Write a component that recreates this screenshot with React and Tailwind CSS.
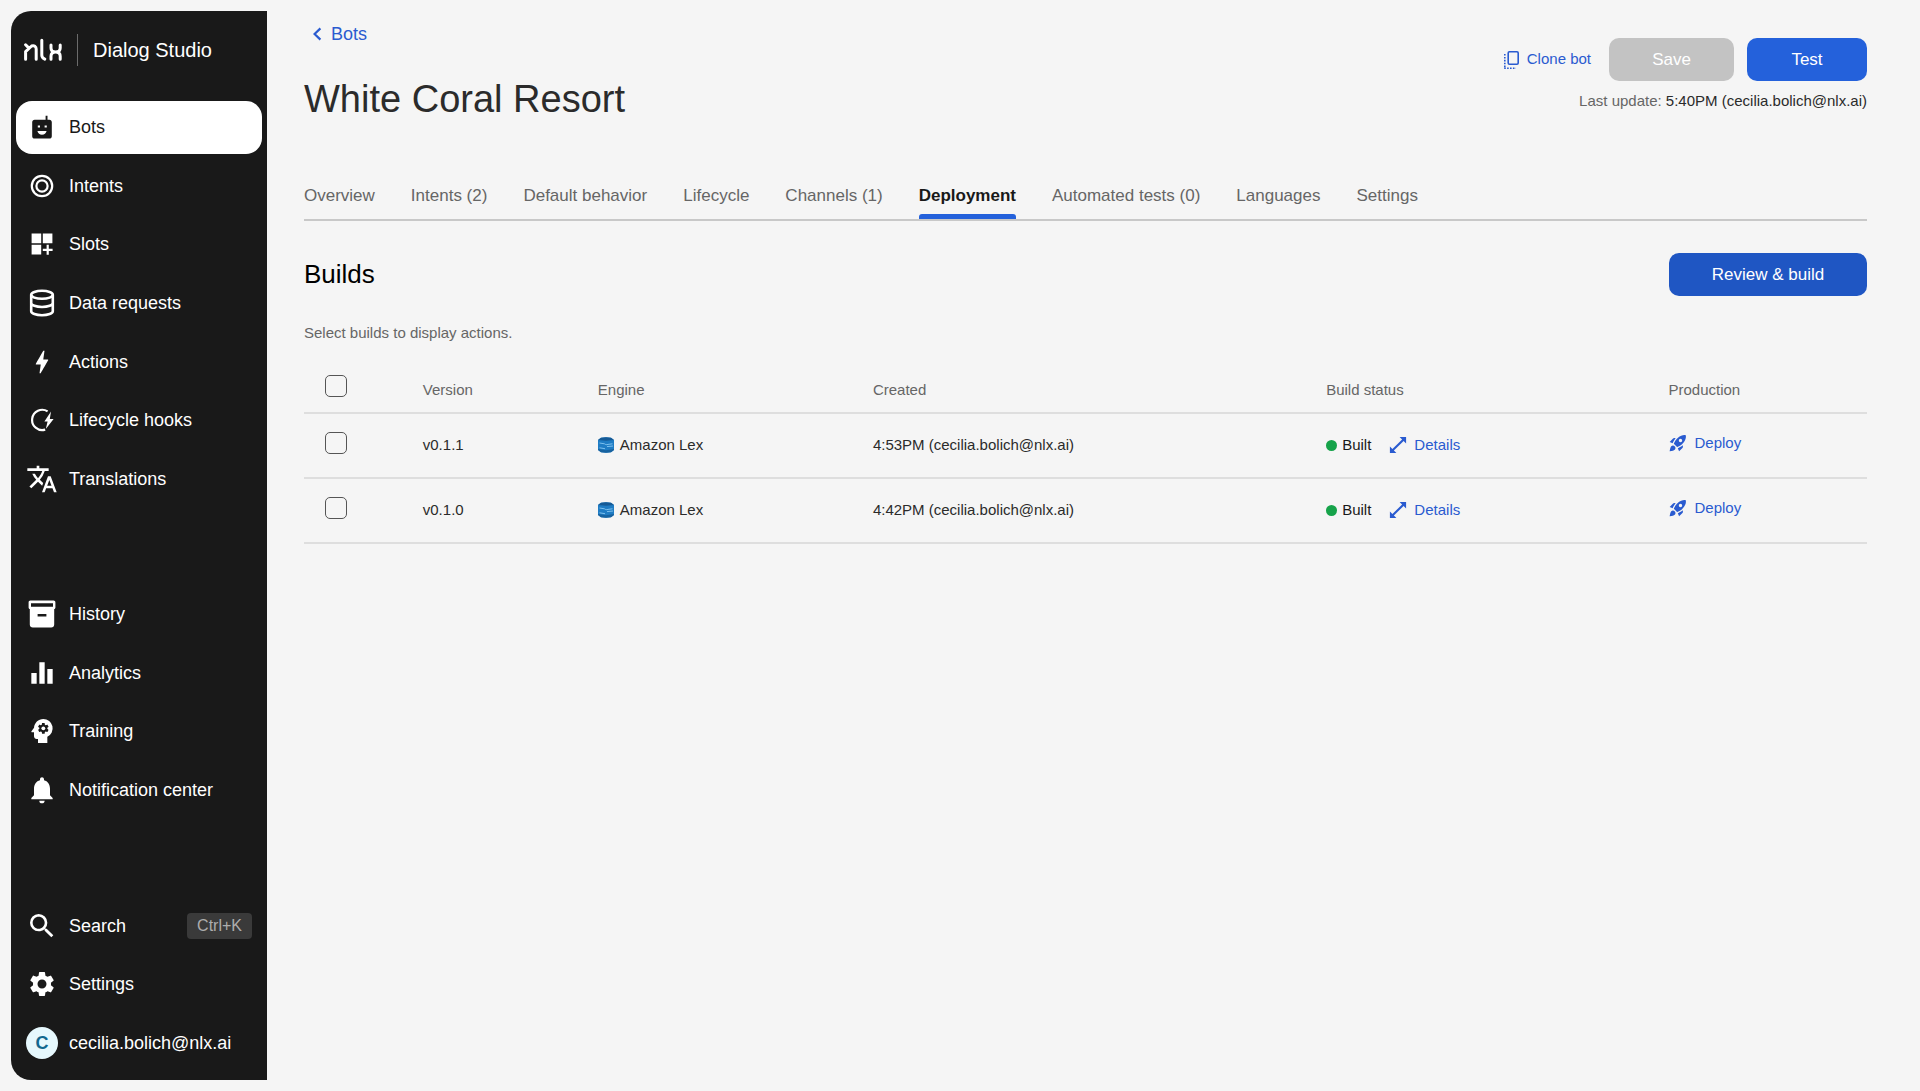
import { useState } from "react";
import {
  MdTranslate,
  MdEqualizer,
  MdPsychology,
  MdNotifications,
  MdSearch,
  MdSettings,
  MdBolt,
  MdRocketLaunch,
} from "react-icons/md";

function NlxLogo() {
  return (
    <svg viewBox="0 0 38 24" className="h-6 w-[38px]" fill="none" stroke="currentColor" strokeWidth="3" strokeLinecap="round" strokeLinejoin="round" aria-label="nlx">
      <path d="M1.600 6.800l2.800 2.800M1.600 21.200v-7.600l6-5.600c2.600-1 4.600.4 4.600 3v10.200" />
      <path d="M17.800 2.200v15c0 2 1 3 3 4" />
      <path d="M27 7v3c0 2.600 1.600 4 4.600 4s4.600-1.400 4.600-4V7M27 21.200v-3c0-2.600 1.600-4.200 4.600-4.200s4.600 1.600 4.600 4.200v3" />
    </svg>
  );
}

function BotIcon() {
  return (
    <svg viewBox="0 0 24 24" className="h-6 w-6" fill="currentColor">
      <path fillRule="evenodd" d="M15.6.8h1.9v4h1.9c1.4 0 2.4 1 2.4 2.4v14c0 1.4-1 2.4-2.4 2.4H4.6c-1.4 0-2.4-1-2.4-2.4v-14c0-1.4 1-2.4 2.4-2.4h11zM7.8 10.4v2.2H10v-2.2zm6.8 0v2.2h2.2v-2.2zM7.4 16c.5 2.2 2.3 3.8 4.6 3.8s4.1-1.6 4.6-3.8z" />
    </svg>
  );
}

function IntentsIcon() {
  return (
    <svg viewBox="0 0 24 24" className="h-6 w-6" fill="none" stroke="currentColor" strokeWidth="2.2">
      <circle cx="12" cy="12" r="10.2" />
      <circle cx="12" cy="12" r="5.600" />
    </svg>
  );
}

function SlotsIcon() {
  return (
    <svg viewBox="0 0 24 24" className="h-6 w-6" fill="currentColor">
      <path d="M1.6 1.6h9.600v9.600H1.600zM12.800 1.600h9.600v9.600h-9.600zM1.600 12.800h9.600v9.600H1.600zM16.600 12.800h2.200v3.900h3.800v2.200h-3.800v3.800h-2.200v-3.800h-3.800v-2.200h3.800z" />
    </svg>
  );
}

function DataIcon() {
  return (
    <svg viewBox="0 0 28 28" className="h-7 w-7" fill="none" stroke="currentColor" strokeWidth="2.600">
      <ellipse cx="14" cy="5.800" rx="10.800" ry="4" />
      <path d="M3.200 5.800v16.400c0 2.200 4.800 4 10.800 4s10.800-1.800 10.800-4V5.800M3.200 14c0 2.200 4.800 4 10.800 4s10.800-1.800 10.800-4" />
    </svg>
  );
}

function LifecycleIcon() {
  return (
    <svg viewBox="0 0 24 24" className="h-6 w-6" fill="none">
      <path d="M17.6 3.400A10.100 10.100 0 1 0 15.200 21.600" stroke="currentColor" strokeWidth="2.200" />
      <path d="M21 3.600l-6.600 10h3.200L15.800 21l7.800-10h-3.800z" fill="currentColor" />
    </svg>
  );
}

function HistoryIcon() {
  return (
    <svg viewBox="0 0 28 28" className="h-7 w-7" fill="currentColor">
      <path fillRule="evenodd" d="M2.4.6h23.2c1 0 1.8.8 1.8 1.8v5c0 .8-.5 1.5-1.2 1.7v15.5c0 1.8-1.2 3-3 3H4.8c-1.8 0-3-1.2-3-3V9.1C1.100 8.900.6 8.200.6 7.400v-5C.6 1.400 1.400.6 2.400.6zM3 3.200v3.600h22V3.200zM9.600 14v2.400h8.800V14z" />
    </svg>
  );
}

function CloneIcon() {
  return (
    <svg viewBox="0 0 18 20" className="h-5 w-[18px]" fill="none" stroke="currentColor">
      <rect x="5.200" y="1.800" width="10" height="12.400" rx="1.200" strokeWidth="1.600" />
      <path d="M1.800 4v14.600M1.200 18.200h11.800" strokeWidth="1.600" strokeDasharray="1.600 1.300" />
    </svg>
  );
}

function ExpandIcon() {
  return (
    <svg viewBox="0 0 18 18" className="h-[18px] w-[18px]" fill="currentColor">
      <path d="M10.600.900h6.500v6.500l-2.500-2.500L4.900 14.600l2.500 2.500H.900v-6.500l2.500 2.500L13.100 3.400z" />
    </svg>
  );
}

function LexIcon() {
  return (
    <svg viewBox="0 0 16 16" className="h-4 w-4">
      <path d="M0 3l3-2.200L8 .2l5 .6L16 3v10l-3 2.200-5 .6-5-.6L0 13z" fill="#1f7cc4" />
      <path d="M0 3l3-2.200L8 .2l5 .6L16 3l-8 .8z" fill="#155a96" />
      <path d="M0 12l8 1.200 8-1.200v1l-3 2.200-5 .6-5-.6L0 13z" fill="#17629f" />
      <path d="M1.500 6l5 .8c1 .8 2 1.200 3.500.6l4.500-.6M1.500 10.800l5.500.9M9 9.600l6-.6" fill="none" stroke="#7cc0ee" strokeWidth="1" />
    </svg>
  );
}

const NAV_GROUPS = [
  {
    label: "Workspace",
    className: "flex-7",
    items: [
      { label: "Bots", icon: <BotIcon />, active: true },
      { label: "Intents", icon: <IntentsIcon /> },
      { label: "Slots", icon: <SlotsIcon /> },
      { label: "Data requests", icon: <DataIcon /> },
      { label: "Actions", icon: <MdBolt className="h-[30px] w-[30px]" /> },
      { label: "Lifecycle hooks", icon: <LifecycleIcon /> },
      { label: "Translations", icon: <MdTranslate className="h-8 w-8" /> },
    ],
  },
  {
    label: "Insights",
    className: "flex-4",
    items: [
      { label: "History", icon: <HistoryIcon /> },
      { label: "Analytics", icon: <MdEqualizer className="h-8 w-8" /> },
      { label: "Training", icon: <MdPsychology className="h-8 w-8" /> },
      { label: "Notification center", icon: <MdNotifications className="h-8 w-8" /> },
    ],
  },
  {
    label: "Account",
    className: "flex-3",
    items: [
      { label: "Search", icon: <MdSearch className="h-8 w-8" />, shortcut: "Ctrl+K" },
      { label: "Settings", icon: <MdSettings className="h-[30px] w-[30px]" /> },
      {
        label: "cecilia.bolich@nlx.ai",
        icon: <span className="flex h-8 w-8 items-center justify-center rounded-full bg-[#e6f8fd] text-lg font-bold text-[#12688f]">C</span>,
      },
    ],
  },
];

const TABS = [
  "Overview",
  "Intents (2)",
  "Default behavior",
  "Lifecycle",
  "Channels (1)",
  "Deployment",
  "Automated tests (0)",
  "Languages",
  "Settings",
];

const BUILDS = [
  { version: "v0.1.1", engine: "Amazon Lex", created: "4:53PM (cecilia.bolich@nlx.ai)", status: "Built" },
  { version: "v0.1.0", engine: "Amazon Lex", created: "4:42PM (cecilia.bolich@nlx.ai)", status: "Built" },
];

function NavItem({ item }) {
  return (
    <li className="flex-1 py-[3px]">
      <a
        href="#"
        className={`flex h-full items-center rounded-2xl px-[10px] text-lg ${item.active ? "bg-white text-[#191919]" : "text-white"}`}
      >
        <span className="flex w-8 shrink-0 items-center justify-center">{item.icon}</span>
        <span className="ml-[11px]">{item.label}</span>
        {item.shortcut && (
          <kbd className="ml-auto rounded bg-[#3a3a3a] px-[10px] py-px font-['Liberation_Sans',Arial,sans-serif] text-base text-[#adadad]">{item.shortcut}</kbd>
        )}
      </a>
    </li>
  );
}

function Sidebar() {
  return (
    <aside className="flex w-64 shrink-0 flex-col rounded-l-[20px] bg-[#191919] px-[5px] pb-2">
      <div className="flex h-[87px] items-start pt-[23px] pl-2 text-white">
        <div className="flex h-8 items-center">
          <NlxLogo />
          <span className="mx-[15px] h-8 w-px bg-[#6b6b6b]" />
          <span className="text-[20px]">Dialog Studio</span>
        </div>
      </div>
      <nav className="flex flex-1 flex-col gap-[77px]">
        {NAV_GROUPS.map((group) => (
          <ul key={group.label} className={`flex flex-col ${group.className}`}>
            {group.items.map((item) => (
              <NavItem key={item.label} item={item} />
            ))}
          </ul>
        ))}
      </nav>
    </aside>
  );
}

function Checkbox({ label, checked, onChange }) {
  return (
    <input
      type="checkbox"
      aria-label={label}
      checked={checked}
      onChange={onChange}
      className="block h-[22px] w-[22px] appearance-none rounded-[5px] border border-[#555] checked:bg-[#2461db]"
    />
  );
}

function BuildsTable() {
  const [selected, setSelected] = useState([]);
  const toggle = (version) =>
    setSelected((prev) => (prev.includes(version) ? prev.filter((v) => v !== version) : [...prev, version]));
  const allSelected = selected.length === BUILDS.length;

  return (
    <table className="mt-4 w-full table-fixed text-left text-[15px] text-[#2b2b2b]">
      <colgroup>
        <col className="w-[7.6%]" />
        <col className="w-[11.2%]" />
        <col className="w-[17.6%]" />
        <col className="w-[29%]" />
        <col className="w-[21.9%]" />
        <col />
      </colgroup>
      <thead>
        <tr className="h-[52px] border-b-2 border-[#dedede] text-[#666]">
          <th className="pl-[21px]">
            <Checkbox
              label="Select all builds"
              checked={allSelected}
              onChange={() => setSelected(allSelected ? [] : BUILDS.map((b) => b.version))}
            />
          </th>
          <th className="pt-2 font-normal">Version</th>
          <th className="pt-2 font-normal">Engine</th>
          <th className="pt-2 font-normal">Created</th>
          <th className="pt-2 font-normal">Build status</th>
          <th className="pt-2 font-normal">Production</th>
        </tr>
      </thead>
      <tbody>
        {BUILDS.map((build) => (
          <tr key={build.version} className="h-[65px] border-b-2 border-[#dedede]">
            <td className="pb-1 pl-[21px]">
              <Checkbox label={`Select ${build.version}`} checked={selected.includes(build.version)} onChange={() => toggle(build.version)} />
            </td>
            <td>{build.version}</td>
            <td>
              <div className="flex items-center gap-[6px]">
                <LexIcon />
                {build.engine}
              </div>
            </td>
            <td>{build.created}</td>
            <td>
              <div className="flex items-center">
                <span className="h-[11px] w-[11px] rounded-full bg-[#16a34a]" />
                <span className="ml-[5px] text-[#191919]">{build.status}</span>
                <button type="button" className="ml-[18px] flex items-center gap-[7px] text-[#2a5bd0]">
                  <ExpandIcon />
                  Details
                </button>
              </div>
            </td>
            <td className="pb-1">
              <button type="button" className="flex items-center gap-[6px] text-[#2a5bd0]">
                <MdRocketLaunch className="h-5 w-5" />
                Deploy
              </button>
            </td>
          </tr>
        ))}
      </tbody>
    </table>
  );
}

export default function App() {
  const [tab, setTab] = useState("Deployment");

  return (
    <div className="flex min-h-screen bg-[#f5f5f5] p-[11px] font-['Liberation_Sans',Arial,sans-serif]">
      <Sidebar />
      <main className="flex-1 pr-[42px] pl-[37px]">
        <header className="flex h-[162px] justify-between">
          <div className="pt-[9px]">
            <a href="#" className="flex items-center gap-[9px] pl-2 text-lg text-[#2a5bd0]">
              <svg viewBox="0 0 10 14" className="h-[14px] w-[10px]" fill="none" stroke="currentColor" strokeWidth="2.200">
                <path d="M8.400 1.400L2.600 7l5.800 5.600" />
              </svg>
              Bots
            </a>
            <h1 className="mt-[25px] text-[38px] leading-[52px] text-[#2b2b2b]">White Coral Resort</h1>
          </div>
          <div className="flex flex-col items-end pt-[27px]">
            <div className="flex items-center">
              <button type="button" className="mr-[18px] flex items-center gap-[6px] text-[15px] text-[#2a5bd0]">
                <CloneIcon />
                Clone bot
              </button>
              <button type="button" disabled className="mr-[13px] h-[43px] w-[125px] rounded-[10px] bg-[#c3c3c3] text-[17px] text-white">
                Save
              </button>
              <button type="button" className="h-[43px] w-[120px] rounded-[10px] bg-[#2461db] text-[17px] text-white">
                Test
              </button>
            </div>
            <p className="mt-[9px] text-[15px] text-[#2b2b2b]">
              <span className="text-[#666]">Last update:</span> 5:40PM (cecilia.bolich@nlx.ai)
            </p>
          </div>
        </header>

        <div role="tablist" className="flex gap-9 border-b-2 border-[#c8c8c8]">
          {TABS.map((name) => (
            <button
              key={name}
              type="button"
              role="tab"
              aria-selected={tab === name}
              onClick={() => setTab(name)}
              className={`flex h-[46px] flex-col justify-between pt-[10px] text-[17px] ${tab === name ? "font-bold text-[#191919]" : "text-[#666]"}`}
            >
              {name}
              {tab === name && <span className="h-[5px] w-full rounded-t-[3px] bg-[#2461db]" />}
            </button>
          ))}
        </div>

        <section>
          <div className="mt-8 flex items-center justify-between">
            <h2 className="text-[26px] text-black">Builds</h2>
            <button type="button" className="h-[43px] w-[198px] rounded-[10px] bg-[#1f56c3] text-[17px] text-white">
              Review &amp; build
            </button>
          </div>
          <p className="mt-[26px] text-[15px] text-[#666]">Select builds to display actions.</p>
          <BuildsTable />
        </section>
      </main>
    </div>
  );
}
